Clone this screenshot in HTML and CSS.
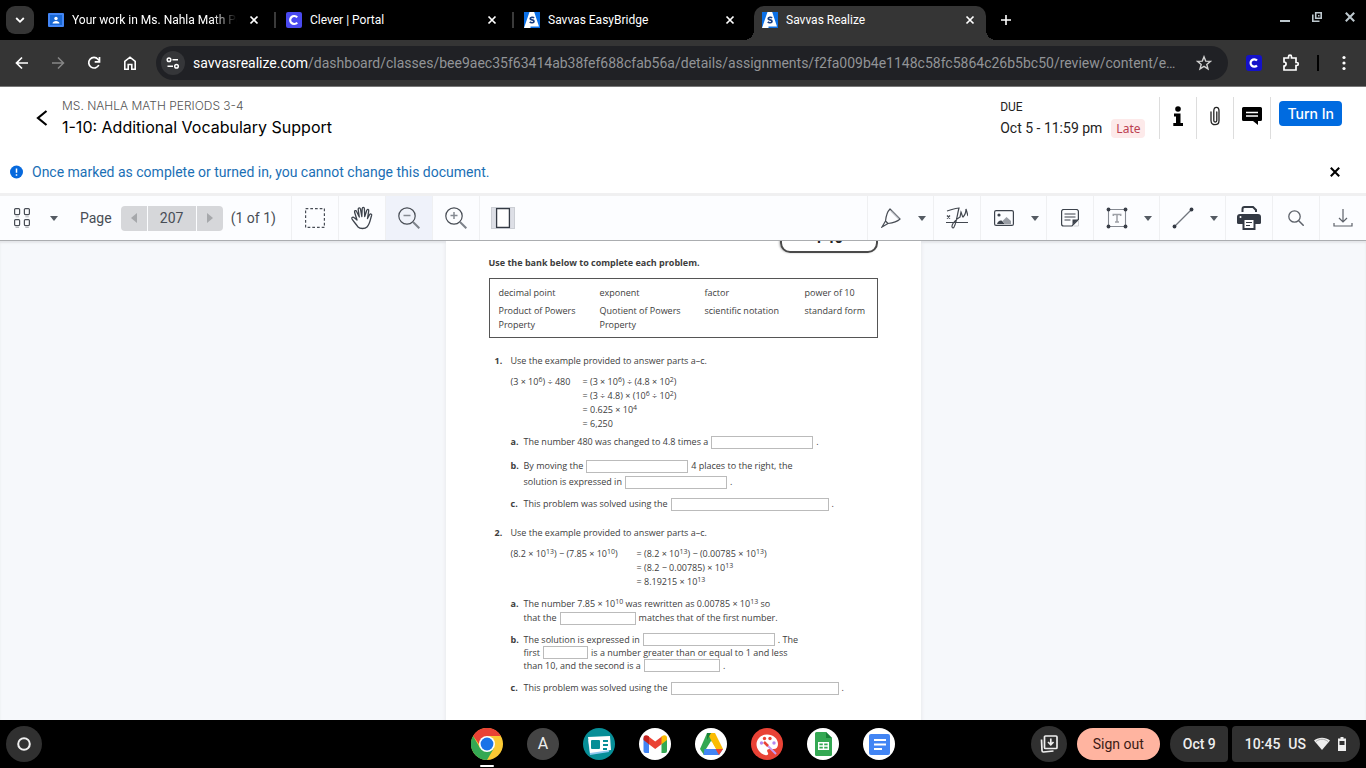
FILE: index.html
```html
<!DOCTYPE html>
<html lang="en">
<head>
<meta charset="utf-8">
<title>Savvas Realize</title>
<link rel="stylesheet" href="styles.css">
</head>
<body>
<svg class="defs" width="0" height="0" aria-hidden="true">
  <symbol id="close" viewBox="0 0 10 10"><path d="M1.5 1.5l7 7M8.500 1.500l-7 7" fill="none" stroke="currentColor" stroke-width="1.700"/></symbol>
  <symbol id="savvas" viewBox="0 0 16 16"><path fill="#0a6fe6" d="M0 0h16v16H0z"/><path fill="#fff" d="M5.500 0h4.700L15 14.500H6.500V16H0z"/><path d="M10 5.900C9.300 5 6.200 4.900 6.200 6.700c0 1.700 3.800.8 3.800 2.600 0 1.900-3.300 1.700-4.200.6" fill="none" stroke="#173d80" stroke-width="1.700"/></symbol>
  <symbol id="clever" viewBox="0 0 16 16"><rect width="16" height="16" rx="2" fill="#4a4af0"/><path d="M11.200 5.400A4 4 0 1 0 11.200 10.600" fill="none" stroke="#fff" stroke-width="2.200"/></symbol>
  <symbol id="caret" viewBox="0 0 8 5"><path d="M0 0h8L4 5z" fill="#555b63"/></symbol>
</svg>

<nav class="tabs" aria-label="Browser tabs">
  <button class="tab-search" aria-label="Search tabs"><svg width="10" height="8" viewBox="0 0 10 8"><path d="M1.200 2L5 5.800 8.800 2" fill="none" stroke="#fff" stroke-width="1.800"/></svg></button>
  <div class="tab">
    <svg width="16" height="16" viewBox="0 0 16 16"><rect y="1" width="16" height="14" rx="1" fill="#4285f4"/><path fill="#1967d2" d="M2 3h12v10H2z"/><circle cx="8" cy="6.500" r="1.700" fill="#fff"/><path fill="#fff" d="M4.500 11.500c0-3.400 7-3.400 7 0z"/></svg>
    <span class="tab-title fade">Your work in Ms. Nahla Math Periods</span>
    <button class="plain" aria-label="Close tab"><svg width="10" height="10"><use href="#close"/></svg></button>
  </div>
  <div class="tab divided">
    <svg width="16" height="16"><use href="#clever"/></svg>
    <span class="tab-title">Clever | Portal</span>
    <button class="plain" aria-label="Close tab"><svg width="10" height="10"><use href="#close"/></svg></button>
  </div>
  <div class="tab divided">
    <svg width="16" height="16"><use href="#savvas"/></svg>
    <span class="tab-title">Savvas EasyBridge</span>
    <button class="plain" aria-label="Close tab"><svg width="10" height="10"><use href="#close"/></svg></button>
  </div>
  <div class="tab active">
    <svg width="16" height="16"><use href="#savvas"/></svg>
    <span class="tab-title">Savvas Realize</span>
    <button class="plain" aria-label="Close tab"><svg width="10" height="10"><use href="#close"/></svg></button>
  </div>
  <button class="plain new-tab" aria-label="New tab"><svg width="12" height="12" viewBox="0 0 12 12"><path d="M6 1v10M1 6h10" stroke="#fff" stroke-width="1.600"/></svg></button>
  <div class="window-controls">
    <button class="plain" aria-label="Minimize"><svg width="10" height="12" viewBox="0 0 10 12"><path d="M0 10h10" stroke="#bdc8ce" stroke-width="2"/></svg></button>
    <button class="plain" aria-label="Restore"><svg width="10" height="10" viewBox="0 0 10 10"><path d="M3.700.8h5.500v5.500H3.700zM.8 2.500v6.700h6.700" fill="none" stroke="#bdc8ce" stroke-width="1.600"/><path d="M6 3h1.500v1.500H6z" fill="#bdc8ce"/></svg></button>
    <button class="plain" aria-label="Close"><svg class="steel" width="12" height="12"><use href="#close"/></svg></button>
  </div>
</nav>

<div class="browser-bar">
  <button class="plain" aria-label="Back"><svg width="14" height="14" viewBox="0 0 14 14"><path d="M13 7H2M7 1.500L1.500 7 7 12.500" fill="none" stroke="#fff" stroke-width="1.700"/></svg></button>
  <button class="plain" aria-label="Forward"><svg width="14" height="14" viewBox="0 0 14 14"><path d="M1 7h11M7 1.500L12.500 7 7 12.500" fill="none" stroke="#868686" stroke-width="1.500"/></svg></button>
  <button class="plain" aria-label="Reload"><svg width="14" height="14" viewBox="0 0 14 14"><path d="M11.800 9A5.300 5.300 0 1 1 11 3.200L12 4.500" fill="none" stroke="#fff" stroke-width="1.700"/><path d="M12.500 1v4.800H7.700" fill="none" stroke="#fff" stroke-width="1.700"/></svg></button>
  <button class="plain" aria-label="Home"><svg width="14" height="14" viewBox="0 0 14 14"><path d="M1.800 5.300L7 1.200l5.200 4.100v7.900H8.800V8.500H5.200v4.700H1.800z" fill="none" stroke="#fff" stroke-width="1.600"/></svg></button>
  <div class="omnibox">
    <button class="site-info" aria-label="Site information"><svg width="14" height="12" viewBox="0 0 14 12"><g fill="none" stroke="#fff" stroke-width="1.500"><circle cx="3" cy="2.800" r="1.800"/><path d="M6.500 2.800H12M1.500 9.200H7"/><circle cx="10.500" cy="9.200" r="1.800"/></g></svg></button>
    <span class="url"><b>savvasrealize.com</b>/dashboard/classes/bee9aec35f63414ab38fef688cfab56a/details/assignments/f2fa009b4e1148c58fc5864c26b5bc50/review/content/e…</span>
    <button class="plain" aria-label="Bookmark"><svg width="16" height="16" viewBox="0 0 16 16"><path d="M8 1.800l1.700 4.300 4.700.3-3.600 3 1.200 4.500L8 11.400l-4 2.500 1.200-4.500-3.600-3 4.700-.3z" fill="none" stroke="#d0d0d0" stroke-width="1.400"/></svg></button>
  </div>
  <div class="extensions">
    <button class="plain" aria-label="Clever"><svg width="16" height="16" viewBox="0 0 16 16"><rect width="16" height="16" rx="3" fill="#1411c9"/><path d="M11 5.500A3.700 3.700 0 1 0 11 10.500" fill="none" stroke="#fff" stroke-width="2.200"/></svg></button>
    <button class="plain" aria-label="Extensions"><svg width="18" height="18" viewBox="0 0 18 18"><path d="M2 4h4.500V2.700a1.500 1.500 0 0 1 3 0V4H14v4.500h.8a1.500 1.500 0 0 1 0 3H14V16H2v-4c2.800 0 2.800-4 0-4z" fill="none" stroke="#fff" stroke-width="1.700"/></svg></button>
    <span class="bar-divider"></span>
    <button class="plain" aria-label="Menu"><svg width="4" height="16" viewBox="0 0 4 16" fill="#fff"><circle cx="2" cy="2.500" r="1.600"/><circle cx="2" cy="8" r="1.600"/><circle cx="2" cy="13.500" r="1.600"/></svg></button>
  </div>
</div>

<header class="assignment">
  <button class="plain back" aria-label="Back"><svg width="12" height="16" viewBox="0 0 12 16"><path d="M10.500 1L2 8l8.500 7" fill="none" stroke="#000" stroke-width="2.200"/></svg></button>
  <div class="titles">
    <p class="course">MS. NAHLA MATH PERIODS 3-4</p>
    <h1>1-10: Additional Vocabulary Support</h1>
  </div>
  <div class="due">
    <p class="due-label">DUE</p>
    <p class="due-date">Oct 5 - 11:59 pm <span class="late">Late</span></p>
  </div>
  <div class="actions">
    <button aria-label="Information"><svg width="12" height="20" viewBox="0 0 12 20"><circle cx="6" cy="3" r="2.800"/><path d="M2 7.500h6.500V17H11v3H1.300v-3H4v-6.500H2z"/></svg></button>
    <button aria-label="Attachments"><svg width="10" height="20" viewBox="0 0 10 20"><path d="M6.800 6v8.500c0 2-3 2-3 0V5c0-4.800 5.200-4.800 5.200 0v9.500c0 5.600-8 5.600-8 0V6" fill="none" stroke="#222" stroke-width="1.300" stroke-linecap="round"/></svg></button>
    <button aria-label="Comments"><svg width="20" height="18" viewBox="0 0 20 18"><path d="M1.500 0h17A1.500 1.500 0 0 1 20 1.500v11a1.500 1.500 0 0 1-1.500 1.500H16v4l-5-4H1.500A1.500 1.500 0 0 1 0 12.500v-11A1.500 1.500 0 0 1 1.500 0z"/><path d="M4 5.500h12M4 9h12" stroke="#fff" stroke-width="1.400"/></svg></button>
  </div>
  <button class="turn-in">Turn In</button>
</header>

<div class="notice" role="status">
  <svg width="13" height="14" viewBox="0 0 13 14"><circle cx="6.500" cy="7" r="6.500" fill="#0669dd"/><path d="M6.500 3.500v4.300M6.500 9.300v1.400" stroke="#fff" stroke-width="1.500"/></svg>
  <p>Once marked as complete or turned in, you cannot change this document.</p>
  <button class="plain" aria-label="Dismiss"><svg width="12" height="12"><use href="#close"/></svg></button>
</div>

<div class="tools" role="toolbar" aria-label="Document tools">
  <button class="thumbs" aria-label="Thumbnails">
    <svg width="16" height="20" viewBox="0 0 16 20"><g fill="none" stroke="#484d55" stroke-width="1.200"><rect x=".6" y=".6" width="5" height="6" rx="1"/><rect x="10.400" y=".6" width="5" height="6" rx="1"/><rect x=".6" y="11.600" width="5" height="6" rx="1"/><rect x="10.400" y="11.600" width="5" height="6" rx="1"/></g><path d="M1.500 8.800h3.500M11.300 8.800h3.500M1.500 19.500h3.500M11.300 19.500h3.500" stroke="#b5b8bd"/></svg>
    <svg width="8" height="5"><use href="#caret"/></svg>
  </button>
  <label for="page-number">Page</label>
  <div class="pager">
    <button aria-label="Previous page"><svg width="6" height="10" viewBox="0 0 6 10"><path d="M6 0v10L0 5z" fill="#a6a8ab"/></svg></button>
    <input id="page-number" type="text" value="207">
    <button aria-label="Next page"><svg width="6" height="10" viewBox="0 0 6 10"><path d="M0 0v10l6-5z" fill="#a6a8ab"/></svg></button>
  </div>
  <span class="count">(1 of 1)</span>
  <button class="tool" aria-label="Marquee zoom"><svg width="20" height="20" viewBox="0 0 20 20"><rect x=".6" y=".6" width="18.800" height="18.800" fill="none" stroke="#484d55" stroke-width="1.200" stroke-dasharray="2.700 2"/></svg></button>
  <button class="tool" aria-label="Pan"><svg width="24" height="24" viewBox="0 0 24 24"><path d="M8 21C6 18 3.500 15.500 2 13c-.8-1.500 1-2.500 2.300-1.300L7 14 4.600 6.300C4.100 4.500 6 4 6.600 5.500L9.300 11 8.200 3.500c-.2-2 1.900-2.200 2.300-.4L11.800 10.500l.4-7.800c.2-1.900 2.100-1.700 2.200 0l.3 7.900 2-6.100c.6-1.700 2.300-1.200 2 .5l-1.200 7.500 2-3.700c.8-1.500 2.600-.8 2.100.7-1.400 3.900-1.600 8.500-4.600 11.500-2 2-7 2-9 0z" fill="none" stroke="#3d434c" stroke-width="1.300" stroke-linejoin="round"/></svg></button>
  <button class="tool pressed" aria-label="Zoom out"><svg width="22" height="22" viewBox="0 0 22 22" fill="none"><circle cx="9" cy="9" r="8.200" stroke="#484d55" stroke-width="1.200"/><path d="M5.500 8.500h7" stroke="#858a92" stroke-width="1.500"/><path d="M15 15l6.300 6.300" stroke="#7d828a" stroke-width="2"/></svg></button>
  <button class="tool" aria-label="Zoom in"><svg width="22" height="22" viewBox="0 0 22 22" fill="none"><circle cx="9" cy="9" r="8.200" stroke="#484d55" stroke-width="1.200"/><path d="M5.500 8.500h7M9 5v7" stroke="#858a92" stroke-width="1.500"/><path d="M15 15l6.300 6.300" stroke="#7d828a" stroke-width="2"/></svg></button>
  <button class="tool" aria-label="Fit page"><svg width="24" height="22" viewBox="0 0 24 22"><rect x=".5" y=".5" width="23" height="21" fill="#dddfe6" stroke="#cbced4"/><rect x="5.600" y="1.600" width="12.800" height="18.800" fill="#fff" stroke="#343a44" stroke-width="1.300"/></svg></button>
  <div class="tools-right">
    <button class="tool has-menu" aria-label="Pen"><span><svg width="20" height="20" viewBox="0 0 20 20" fill="none" stroke="#484d55" stroke-width="1.200"><path d="M9 1l10 10c-3 3-7 4-12 4.500L4.500 13C5 8 6 4 9 1zM4.500 13L1 19l6-3.500"/><path d="M10 3l8 8" stroke="#b6b9bf"/></svg></span><svg width="8" height="5"><use href="#caret"/></svg></button>
    <button class="tool" aria-label="Signature"><svg width="22" height="22" viewBox="0 0 22 22" fill="none" stroke="#42474f"><path d="M1 4c4-1 8-3 12-3-2 7-3 19-6 20-3-1 1-8 7-11l1-5c1 2 1 4 2 5 2-2 3-5 3-8l2 7" stroke-width="1.200"/><path d="M0 15.500h22" stroke-width="1"/><path d="M1 8.500l3 3m0-3l-3 3" stroke-width="1.300"/></svg></button>
    <button class="tool has-menu" aria-label="Image"><span><svg width="20" height="16" viewBox="0 0 20 16"><rect x=".6" y=".6" width="18.800" height="14.800" rx="1.500" fill="none" stroke="#3d434c" stroke-width="1.200"/><circle cx="5" cy="5" r="1.600" fill="#3d434c"/><path d="M3 14c1-3 4-5 6-2l2 2z" fill="#3d434c"/><path d="M8.500 11l4-4 4.500 4v3h-6z" fill="#9a9ea5"/></svg></span><svg width="8" height="5"><use href="#caret"/></svg></button>
    <button class="tool" aria-label="Note"><svg width="18" height="18" viewBox="0 0 18 18"><path d="M17.400 10.500V2.500a2 2 0 0 0-2-2H2.600a2 2 0 0 0-2 2v12.500a2 2 0 0 0 2 2H11z" fill="none" stroke="#3d434c" stroke-width="1.200"/><path d="M11.500 16v-5.500H17z" fill="#3d434c"/><path d="M3.500 5h11M3.500 8h11M3.500 11h6" stroke="#3d434c" stroke-width="1.200"/><path d="M17.500 12v5h-5" fill="none" stroke="#d0d2d6"/></svg></button>
    <button class="tool has-menu" aria-label="Text"><span><svg width="22" height="22" viewBox="0 0 22 22"><path d="M2.500 2.500h17v17h-17z" fill="none" stroke="#858991" stroke-width="1.100"/><g fill="#3a3f48"><circle cx="2.500" cy="2.500" r="1.900"/><circle cx="19.500" cy="2.500" r="1.900"/><circle cx="2.500" cy="19.500" r="1.900"/><circle cx="19.500" cy="19.500" r="1.900"/></g><path d="M7.300 9V7.500h7.400V9M11 7.500v7.300M9 14.900h4" fill="none" stroke="#9da0a6" stroke-width="1.500"/></svg></span><svg width="8" height="5"><use href="#caret"/></svg></button>
    <button class="tool has-menu" aria-label="Line"><span><svg width="22" height="22" viewBox="0 0 22 22"><path d="M2.500 19.500l17-17" stroke="#70757d" stroke-width="1.200"/><circle cx="2.500" cy="19.500" r="1.900" fill="#343a44"/><circle cx="19.500" cy="2.500" r="1.900" fill="#343a44"/></svg></span><svg width="8" height="5"><use href="#caret"/></svg></button>
    <button class="tool" aria-label="Print"><svg width="24" height="24" viewBox="0 0 24 24"><path d="M5.500 6V3a2 2 0 0 1 2-2H16l3 3v2" fill="none" stroke="#343a44" stroke-width="2"/><path d="M3 8h18a3 3 0 0 1 3 3v5.500a1.500 1.500 0 0 1-1.500 1.500H1.500A1.500 1.500 0 0 1 0 16.500V11a3 3 0 0 1 3-3z" fill="#343a44"/><path d="M6.500 13h11v10h-11z" fill="#fff" stroke="#343a44" stroke-width="2"/><path d="M9 16.500h6M9 19.500h4" stroke="#343a44" stroke-width="1.200"/><circle cx="3.500" cy="11" r="1" fill="#fff"/></svg></button>
    <button class="tool" aria-label="Search"><svg width="16" height="16" viewBox="0 0 16 16" fill="none"><circle cx="6.500" cy="6.500" r="5.700" stroke="#5d626a" stroke-width="1.300"/><path d="M10.700 10.700l5 5" stroke="#5d626a" stroke-width="1.500"/></svg></button>
    <button class="tool" aria-label="Download"><svg width="20" height="20" viewBox="0 0 20 20" fill="none" stroke="#5d626a" stroke-width="1.200"><path d="M10 1v13M6 10l4 4 4-4M1 15v3h18v-3"/></svg></button>
  </div>
</div>

<main class="viewer">
  <article class="page">
    <div class="badge">1-10</div>
    <h2>Use the bank below to complete each problem.</h2>
    <div class="bank">
      <span>decimal point</span><span>exponent</span><span>factor</span><span>power of 10</span>
      <span>Product of Powers<br>Property</span><span>Quotient of Powers<br>Property</span><span>scientific notation</span><span>standard form</span>
    </div>

    <section class="problem">
      <b>1.</b>
      <div>
        <p>Use the example provided to answer parts a–c.</p>
        <div class="equation">
          <span>(3 × 10<sup>6</sup>) ÷ 480</span><span>= (3 × 10<sup>6</sup>) ÷ (4.8 × 10<sup>2</sup>)</span>
          <span></span><span>= (3 ÷ 4.8) × (10<sup>6</sup> ÷ 10<sup>2</sup>)</span>
          <span></span><span>= 0.625 × 10<sup>4</sup></span>
          <span></span><span>= 6,250</span>
        </div>
        <div class="part close-up"><b>a.</b><div>
          <p class="line">The number 480 was changed to 4.8 times a <input class="medium" aria-label="1a">.</p>
        </div></div>
        <div class="part roomy"><b>b.</b><div>
          <p class="line">By moving the <input class="medium" aria-label="1b first blank"> 4 places to the right, the</p>
          <p class="line">solution is expressed in <input class="medium" aria-label="1b second blank">.</p>
        </div></div>
        <div class="part"><b>c.</b><div>
          <p class="line">This problem was solved using the <input class="long" aria-label="1c">.</p>
        </div></div>
      </div>
    </section>

    <section class="problem">
      <b>2.</b>
      <div>
        <p>Use the example provided to answer parts a–c.</p>
        <div class="equation wide">
          <span>(8.2 × 10<sup>13</sup>) − (7.85 × 10<sup>10</sup>)</span><span>= (8.2 × 10<sup>13</sup>) − (0.00785 × 10<sup>13</sup>)</span>
          <span></span><span>= (8.2 − 0.00785) × 10<sup>13</sup></span>
          <span></span><span>= 8.19215 × 10<sup>13</sup></span>
        </div>
        <div class="part"><b>a.</b><div>
          <p>The number 7.85 × 10<sup>10</sup> was rewritten as 0.00785 × 10<sup>13</sup> so</p>
          <p class="line">that the <input class="short" aria-label="2a"> matches that of the first number.</p>
        </div></div>
        <div class="part dense"><b>b.</b><div>
          <p class="line">The solution is expressed in <input class="wide" aria-label="2b first blank">. The</p>
          <p class="line">first <input class="tiny" aria-label="2b second blank"> is a number greater than or equal to 1 and less</p>
          <p class="line">than 10, and the second is a <input class="short" aria-label="2b third blank">.</p>
        </div></div>
        <div class="part last"><b>c.</b><div>
          <p class="line">This problem was solved using the <input class="longest" aria-label="2c">.</p>
        </div></div>
      </div>
    </section>
  </article>
</main>

<footer class="shelf">
  <button class="launcher" aria-label="Launcher"><svg width="14" height="14" viewBox="0 0 14 14"><circle cx="7" cy="7" r="5.800" fill="none" stroke="#eee" stroke-width="2"/></svg></button>
  <div class="apps">
    <button class="running" aria-label="Chrome"><svg width="32" height="32" viewBox="0 0 32 32"><circle cx="16" cy="16" r="16" fill="#fbc934"/><path fill="#e94235" d="M2.100 8A16 16 0 0 1 29.900 8H16L8 16z"/><path fill="#34a853" d="M2.100 8A16 16 0 0 0 16 32l7-12-7 3-7-3z"/><circle cx="16" cy="16" r="8" fill="#fff"/><circle cx="16" cy="16" r="6.400" fill="#1a73e8"/></svg></button>
    <button class="letter" aria-label="App A">A</button>
    <button aria-label="Screencast"><svg width="32" height="32" viewBox="0 0 32 32"><circle cx="16" cy="16" r="16" fill="#078e97"/><path fill="#8fc8f0" d="M5 12l19-3 2 15-19 3z"/><path fill="#fff" d="M5 9l22-1 1 14-21 3z"/><rect x="8" y="12" width="9" height="9" rx="1" fill="#078e97"/><path d="M20 13h5M20 17h5M20 21h4" stroke="#078e97" stroke-width="1.800"/></svg></button>
    <button aria-label="Gmail"><svg width="32" height="32" viewBox="0 0 32 32"><circle cx="16" cy="16" r="16" fill="#fff"/><path fill="#4285f4" d="M4.500 10v13a2 2 0 0 0 2 2H10V14z"/><path fill="#34a853" d="M28 10v13a2 2 0 0 1-2 2h-3.500V14z"/><path fill="#ea4335" d="M9 8l7.200 5.600L23.500 8v7.500l-7.300 5.500L9 15.500z"/><path fill="#c5221f" d="M4.500 10c0-3 3-3.500 5.500-1.500v7.700l-5.500-4.200z"/><path fill="#fbbc04" d="M28 10c0-3-3-3.500-5.500-1.500v7.700L28 12z"/></svg></button>
    <button aria-label="Drive"><svg width="32" height="32" viewBox="0 0 32 32"><circle cx="16" cy="16" r="16" fill="#fff"/><path fill="#34a853" d="M12 5h4l2.500 5L9 27l-4-6z"/><path fill="#fbbc04" d="M12.500 5H20l8 16h-7.500z"/><path fill="#4285f4" d="M9.500 21H28l-4 6H8.500z"/><path fill="#ea4335" d="M20.500 21H28l-4 6z"/><path fill="#188038" d="M12 5h4l-4 7z"/><path fill="#fff" d="M16 13l5 8H11z"/></svg></button>
    <button aria-label="Canvas"><svg width="32" height="32" viewBox="0 0 32 32"><circle cx="16" cy="16" r="16" fill="#e94235"/><path fill="#fff" d="M16 6.500c-6 0-10.500 4.300-10.500 9.700S10 26 14 27c3 .8 4-1 2.500-3-1-1.500 0-3 2-3h4c3 0 4.500-2 4.500-5 0-5.500-5-9.500-11-9.500z"/><circle cx="10.500" cy="15" r="1.700" fill="#b588ef"/><circle cx="13.500" cy="10.500" r="1.700" fill="#e94235"/><circle cx="19" cy="10.500" r="1.700" fill="#e94235"/><circle cx="23" cy="15" r="1.700" fill="#b588ef"/><path d="M16 17l9 9" stroke="#c99bf2" stroke-width="2"/><path d="M13 14l4 4" stroke="#e94235" stroke-width="2.500"/></svg></button>
    <button aria-label="Sheets"><svg width="32" height="32" viewBox="0 0 32 32"><circle cx="16" cy="16" r="16" fill="#fff"/><path fill="#34a853" d="M9.500 4H19l6 6v16.500a1.500 1.500 0 0 1-1.500 1.500h-14A1.500 1.500 0 0 1 8 26.500v-21A1.500 1.500 0 0 1 9.500 4z"/><path fill="#188038" d="M19 4l6 6h-6z"/><path d="M11.700 14.700h9.600v6.600h-9.600zM16.500 14.700v6.600M11.700 18h9.600" fill="none" stroke="#fff" stroke-width="1.400"/></svg></button>
    <button aria-label="Docs"><svg width="32" height="32" viewBox="0 0 32 32"><circle cx="16" cy="16" r="16" fill="#fff"/><rect x="6" y="6" width="21" height="21" rx="2" fill="#4285f4"/><path d="M11 12h12M11 16.500h12M11 21h8" stroke="#fff" stroke-width="2"/></svg></button>
  </div>
  <div class="status">
    <button class="tray" aria-label="Holding space"><svg width="20" height="20" viewBox="0 0 20 20" fill="none" stroke="#eee" stroke-width="1.700"><rect x="5.500" y="2" width="12.500" height="12.500" rx="1"/><path d="M2.500 5.500L3 16.500a1.500 1.500 0 0 0 1.500 1.500l10-1"/><path d="M11.800 4.500v6M9 8l2.800 2.800L14.500 8"/></svg></button>
    <button class="sign-out">Sign out</button>
    <div class="pills">
      <button class="date">Oct 9</button>
      <button class="clock"><span>10:45</span><span>US</span>
        <svg width="16" height="14" viewBox="0 0 16 14"><path d="M0 3.500C4.500-.2 11.500-.2 16 3.500L8 13z" fill="#eee"/><path d="M2 4.500c4-3 8-3 12 0" fill="none" stroke="#999" stroke-width=".8"/></svg>
        <svg width="8" height="14" viewBox="0 0 8 14"><path d="M2.500 0h3v1.500H8V14H0V1.500h2.500z" fill="#eee"/><path d="M1.500 4h5v4h-5z" fill="#303030"/></svg>
      </button>
    </div>
  </div>
</footer>
</body>
</html>
```

FILE: styles.css
```css
* { box-sizing: border-box; }
body { margin: 0; height: 100vh; display: flex; flex-direction: column; overflow: hidden; background: #fff; color: #111; font: 14px/20px Roboto, sans-serif; }
p, h1, h2 { margin: 0; font-weight: 400; }
svg { display: block; flex: none; }
.defs { position: absolute; }
button { font: inherit; color: inherit; border: 0; padding: 0; background: none; display: flex; align-items: center; justify-content: center; flex: none; }
input { font: inherit; color: inherit; min-width: 0; border-radius: 0; }

.tabs { display: flex; height: 40px; background: #000; color: #fff; font-size: 12px; padding-left: 6px; flex: none; }
.tab-search { width: 28px; height: 28px; margin: 6px 2px 0 0; border-radius: 9px; background: #353535; }
.tab { position: relative; display: flex; align-items: center; gap: 8px; flex: 0 1 238px; min-width: 0; padding: 0 15px 0 12px; }
.tab-title { flex: 1; overflow: hidden; white-space: nowrap; padding-right: 12px; }
.tab-title.fade { flex: 0 1 167px; margin-right: 4px; -webkit-mask-image: linear-gradient(90deg, #000 85%, transparent); mask-image: linear-gradient(90deg, #000 85%, transparent); }
.tab .plain { margin-left: auto; }
.tab.divided::before { content: ""; position: absolute; left: 0; top: 12px; width: 2px; height: 16px; background: #3a3a3a; }
.tab.active { background: #353535; height: 34px; margin-top: 6px; padding: 0 11px 6px 8px; margin-left: 4px; flex-basis: 232px; border-radius: 10px 10px 0 0; }
.tab.active::before, .tab.active::after { content: ""; position: absolute; bottom: 0; width: 10px; height: 10px; }
.tab.active::before { left: -10px; background: radial-gradient(circle at 0 0, transparent 10px, #353535 10px); }
.tab.active::after { right: -10px; background: radial-gradient(circle at 100% 0, transparent 10px, #353535 10px); }
.new-tab { margin-left: 14px; }
.window-controls { display: flex; align-items: center; gap: 22px; margin-left: auto; padding: 0 10px 6px 0; color: #bdc8ce; }

.browser-bar { display: flex; align-items: center; gap: 22px; height: 47px; padding: 0 20px 0 15px; background: #353535; border-bottom: 1px solid #777; flex: none; }
.omnibox { display: flex; align-items: center; flex: 1; min-width: 0; height: 34px; margin-left: -3px; padding: 0 16px 0 5px; border-radius: 17px; background: #202125; color: #929497; }
.site-info { width: 24px; height: 24px; border-radius: 12px; background: #353639; margin-right: 8px; }
.url { flex: 1; overflow: hidden; white-space: nowrap; text-overflow: ellipsis; font-size: 14px; }
.url b { font-weight: 400; color: #fff; }
.extensions { display: flex; align-items: center; gap: 20px; margin-left: -4px; }
.bar-divider { width: 2px; height: 16px; background: #000; margin-left: -3px; margin-right: 3px; }

.assignment { display: flex; align-items: flex-start; height: 65px; padding: 10px 24px 0 36px; flex: none; }
.back { margin: 13px 14px 0 0; }
.titles { font-family: Inter, sans-serif; color: #000; }
.course { font-size: 12px; line-height: 18px; color: #555; font-weight: 300; }
h1 { font-size: 16px; line-height: 24px; }
.due { margin-left: auto; color: #222; }
.due-label { font-size: 12px; line-height: 20px; }
.due-date { display: flex; align-items: center; gap: 9px; line-height: 22px; }
.late { padding: 0 5px; border-radius: 4px; background: #fdeaea; color: #bb4050; font: 12px/19px "Noto Sans", sans-serif; }
.actions { display: flex; margin: 0 8px 0 14px; border-right: 1px solid #ddd; }
.actions button { width: 37px; height: 42px; padding-bottom: 5px; border-left: 1px solid #ddd; }
.turn-in { height: 25px; padding: 0 8px; margin-top: 4px; border-radius: 4px; background: #006be0; color: #fff; font: 500 14px/20px Inter, sans-serif; }

.notice { display: flex; align-items: center; gap: 9px; height: 44px; padding: 0 25px 2px 10px; border-bottom: 3px solid #f0f0f1; color: #1a6fb5; flex: none; }
.notice button { margin-left: auto; color: #000; }

.tools { display: flex; align-items: center; height: 45px; background: #fcfdff; border-bottom: 1px solid #abadb0; color: #484d55; flex: none; }
.thumbs { gap: 20px; padding: 0 22px 0 14px; }
.pager { display: flex; gap: 1px; height: 25px; margin: 0 8px 0 9px; border-radius: 4px; overflow: hidden; }
.pager button { width: 26px; background: #d6d7da; }
.pager input { width: 48px; border: 0; padding: 0; text-align: center; background: #d6d7da; }
.count { margin-right: 15px; }
.tool { width: 47px; height: 44px; border-left: 1px solid #eff0f2; }
.tool.pressed { background: #eff2fa; }
.tools-right { display: flex; margin-left: auto; }
.has-menu { width: 66px; justify-content: flex-start; gap: 4px; }
.has-menu span { display: flex; justify-content: center; width: 46px; }

.viewer { flex: 1; min-height: 0; overflow: hidden; background: #f6f8fb; box-shadow: inset 0 2px 2px #e4e6e9; display: flex; justify-content: center; align-items: flex-start; }
.page { width: 475px; flex: none; min-height: 600px; background: #fff; padding: 0 43px; box-shadow: 0 0 4px #e2e3e5; font: 9px/14px "Open Sans", sans-serif; color: #3d3d3d; }
.badge { width: 98px; height: 34px; margin: -22px 0 0 auto; border: 2px solid #4a4a4a; border-radius: 10px; box-shadow: -1px 0 2px #bbb; text-align: center; font: bold 14px/33px "Open Sans", sans-serif; color: #222; }
h2 { font-size: 9px; line-height: 14px; font-weight: 700; margin: 3px 0 8px; }
.bank { display: grid; grid-template-columns: 101px 105px 100px 1fr; row-gap: 4px; border: 1px solid #555; padding: 7px 0 5px 9px; white-space: nowrap; }
.problem { display: grid; grid-template-columns: 16px 1fr; margin: 16px 0 0 6px; white-space: nowrap; }
.problem + .problem { margin-top: 15px; }
.equation { display: grid; grid-template-columns: 72px 1fr; margin: 7px 0 8px; }
.equation.wide { grid-template-columns: 126px 1fr; }
sup { font-size: 7px; line-height: 0; vertical-align: 3px; }
.part { display: grid; grid-template-columns: 13px 1fr; margin-top: 7px; }
.part.close-up { margin-top: -4px; }
.roomy .line, .roomy > b { line-height: 16px; height: 16px; }
.roomy { margin-top: 9px; }
.dense { margin-top: 8px; line-height: 13px; }
.dense .line { height: 13px; }
.last { margin-top: 9px; }
.line { display: flex; align-items: center; gap: 3px; height: 14px; }
.line input { height: 13px; padding: 0 2px; border: 1px solid #bbb; background: #fff; }
.line .tiny { width: 45px; }
.line .short { width: 76px; }
.line .medium { width: 102px; }
.line .wide { width: 132px; }
.line .long { width: 158px; }
.line .longest { width: 168px; }

.shelf { display: grid; grid-template-columns: 1fr auto 1fr; align-items: center; height: 48px; padding: 0 6px; background: #000; color: #eee; flex: none; }
.launcher, .tray { width: 36px; height: 36px; border-radius: 18px; background: #303030; }
.apps { display: flex; gap: 24px; }
.apps button { position: relative; width: 32px; height: 32px; }
.running::after { content: ""; position: absolute; left: 9px; top: 37px; width: 14px; height: 2px; border-radius: 1px; background: #fff; }
.apps .letter { border-radius: 16px; background: #444; font-size: 16px; }
.status { display: flex; align-items: center; justify-content: flex-end; gap: 10px; }
.sign-out { height: 32px; padding: 0 16px; border-radius: 16px; background: #ffb4a0; color: #3c1a14; }
.pills { display: flex; gap: 4px; }
.pills button { height: 36px; background: #303030; font-weight: 500; }
.date { padding: 0 12px 0 13px; border-radius: 18px 4px 4px 18px; }
.pills .clock { padding: 0 14px 0 13px; border-radius: 4px 18px 18px 4px; gap: 8px; }
```
